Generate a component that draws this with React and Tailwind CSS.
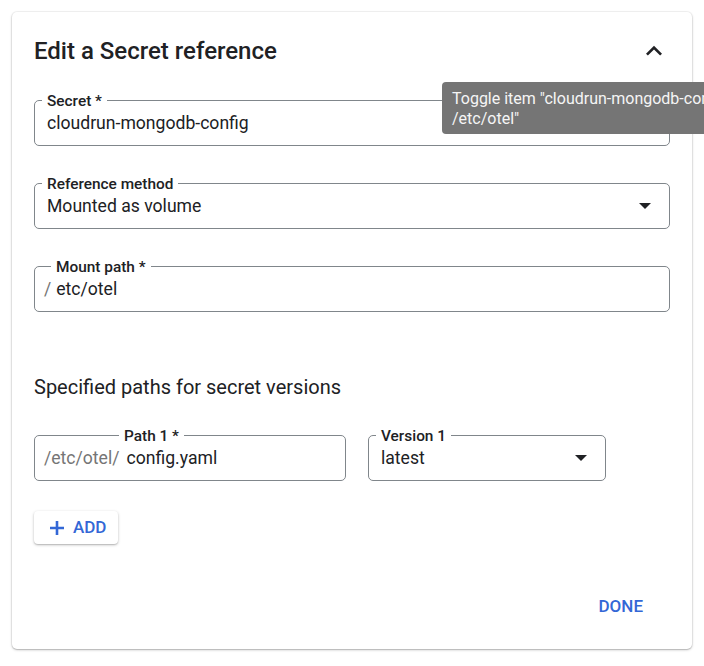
import React from 'react'

const Caret = () => (
  <svg width="12" height="6" viewBox="0 0 12 6" className="shrink-0">
    <path d="M0 0h12L6 6z" fill="#202124" />
  </svg>
)

function Field({ label, labelPos, prefix, prefixGap, value, select, className }) {
  return (
    <div
      className={`relative flex h-[46px] items-center rounded-[5px] border border-[#80868b] pr-[18px] ${className}`}
    >
      <span
        className={`absolute top-0 -translate-y-1/2 bg-white px-[5px] text-[15.4px] font-medium leading-[18px] text-[#202124] ${labelPos}`}
      >
        {label}
      </span>
      {prefix ? (
        <span className={`pl-[9px] text-[17.6px] text-[#757575] ${prefixGap}`}>{prefix}</span>
      ) : (
        <span className="pl-[12px]" />
      )}
      <span className="flex-1 text-[17.6px] text-[#202124]">{value}</span>
      {select && <Caret />}
    </div>
  )
}

export default function App() {
  return (
    <div className="relative h-[666px] w-[704px] overflow-hidden bg-white font-['Roboto',sans-serif]">
      <div className="ml-[12px] mt-[12px] w-[680px] rounded-[5px] bg-white px-[22px] pb-[24px] pt-[22px] shadow-[0_1px_3px_rgba(0,0,0,0.2),0_1px_1px_rgba(0,0,0,0.12),0_0_0_1px_rgba(0,0,0,0.04)]">
        <div className="flex h-[34px] items-center justify-between">
          <h1 className="text-[24px] font-medium leading-[34px] text-[#202124]">Edit a Secret reference</h1>
          <svg width="32" height="32" viewBox="0 0 24 24">
            <path d="M12 8l-6 6 1.41 1.41L12 10.83l4.59 4.58L18 14z" fill="#202124" />
          </svg>
        </div>

        <Field className="mt-[32px]" label="Secret *" labelPos="left-[7px]" value="cloudrun-mongodb-config" />
        <Field
          className="mt-[37px]"
          label="Reference method"
          labelPos="left-[7px]"
          value="Mounted as volume"
          select
        />
        <Field
          className="mt-[37px]"
          label="Mount path *"
          labelPos="left-[16px]"
          prefix="/"
          prefixGap="pr-[5px]"
          value="etc/otel"
        />

        <h2 className="mt-[61px] text-[20px] leading-[28px] text-[#202124]">Specified paths for secret versions</h2>

        <div className="mt-[34px] flex gap-[22px]">
          <Field
            className="w-[312px]"
            label="Path 1 *"
            labelPos="left-[84px]"
            prefix="/etc/otel/"
            prefixGap="pr-[7px]"
            value="config.yaml"
          />
          <Field className="w-[238px]" label="Version 1" labelPos="left-[7px]" value="latest" select />
        </div>

        <button className="mt-[30px] flex h-[33px] w-[84px] items-center gap-[8px] rounded-[4px] bg-white pl-[15px] text-[17px] font-medium text-[#3367d6] shadow-[0_1px_3px_rgba(0,0,0,0.25),0_1px_1px_rgba(0,0,0,0.1)]">
          <svg width="16" height="16" viewBox="0 0 16 16">
            <path d="M8 1v14M1 8h14" stroke="#3367d6" strokeWidth="2.6" />
          </svg>
          ADD
        </button>

        <div className="mt-[45px] flex justify-end">
          <button className="mr-[19px] h-[36px] px-[8px] text-[17px] font-medium text-[#3367d6]">DONE</button>
        </div>
      </div>

      <div className="absolute left-[442px] top-[82px] w-[300px] rounded-[4px] bg-[#757575] px-[10px] pb-[5px] pt-[7px] text-[16px] leading-[20px] text-[#f5f5f5]">
        Toggle item "cloudrun-mongodb-config:
        <br />
        /etc/otel"
      </div>
    </div>
  )
}
